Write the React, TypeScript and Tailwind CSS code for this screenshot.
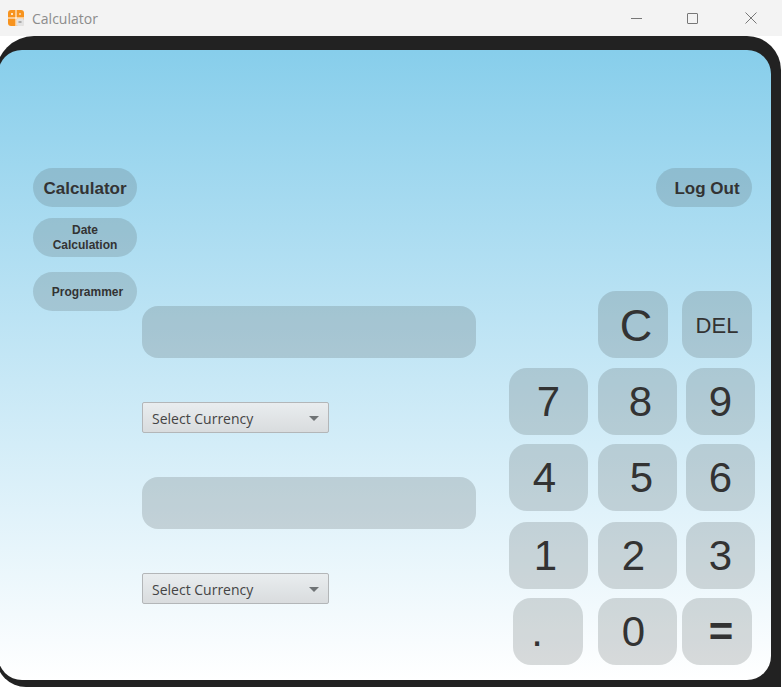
import React from 'react';

const font = { fontFamily: '"Liberation Sans", Arial, sans-serif' };

const Key: React.FC<{ label: string; w: string; text?: string }> = ({ label, w, text = 'text-[42px]' }) => (
  <button
    className={`${w} h-[67px] rounded-[18px] bg-[rgba(74,84,86,0.21)] text-[#333] flex items-center justify-center leading-none ${text}`}
  >
    {label}
  </button>
);

const SideButton: React.FC<{ children: React.ReactNode; className?: string }> = ({ children, className = '' }) => (
  <button
    className={`w-[104px] h-[39px] rounded-full bg-[rgba(74,84,86,0.2)] text-[#333] font-bold flex items-center justify-center text-center ${className}`}
  >
    {children}
  </button>
);

const CurrencySelect: React.FC = () => (
  <div className="w-[187px] h-[31px] rounded-[2px] border border-[#b3b6b8] bg-linear-to-b from-[#e9edef] to-[#d9dcde] flex items-center justify-between pl-[9px] pr-[9px] pt-[1px]">
    <span className="text-[14px] text-[#444]" style={{ fontFamily: '"Open Sans", "Noto Sans", sans-serif' }}>
      Select Currency
    </span>
    <svg width="10" height="5" viewBox="0 0 10 5">
      <path d="M0 0 H10 L5 5 Z" fill="#6f7375" />
    </svg>
  </div>
);

const AppIcon = () => (
  <svg width="16" height="16" viewBox="0 0 16 16">
    <rect x="0" y="0" width="16" height="16" rx="3" fill="#f7931e" />
    <rect x="8.5" y="8.5" width="7.5" height="7.5" rx="1.5" fill="#e3e3e3" />
    <path d="M0 8 H16 M8 0 V16" stroke="#fff" strokeWidth="1" />
    <path d="M3 4 H5 M4 3 V5" stroke="#fff" strokeWidth="1" />
    <path d="M11 4 H13" stroke="#fff" strokeWidth="1" />
    <path d="M10.5 12 H13.5" stroke="#888" strokeWidth="1.2" />
  </svg>
);

export default function App() {
  return (
    <div className="w-[782px] h-[687px] overflow-hidden bg-white flex flex-col" style={font}>
      {/* title bar */}
      <div className="h-[36px] shrink-0 bg-[#f3f3f3] flex items-center">
        <div className="ml-[8px]">
          <AppIcon />
        </div>
        <span className="ml-[8px] text-[14px] text-[#8c8c8c]" style={{ fontFamily: '"Open Sans", "Noto Sans", sans-serif' }}>
          Calculator
        </span>
        <div className="ml-auto flex items-center">
          <div className="w-[56px] flex justify-center">
            <div className="w-[11px] h-px bg-[#777]" />
          </div>
          <div className="w-[56px] flex justify-center">
            <div className="w-[11px] h-[11px] border border-[#777] rounded-[1px]" />
          </div>
          <div className="w-[62px] flex justify-center">
            <svg width="12" height="12" viewBox="0 0 12 12">
              <path d="M0.5 0.5 L11.5 11.5 M11.5 0.5 L0.5 11.5" stroke="#777" strokeWidth="1" />
            </svg>
          </div>
        </div>
      </div>

      {/* app frame */}
      <div className="ml-[-4px] w-[785px] h-[652px] bg-[#222] rounded-tl-[38px] rounded-tr-[34px] rounded-bl-[30px] pt-[14px] pl-[2px]">
        <div className="w-[773px] h-[630px] rounded-[24px] bg-linear-to-b from-[#87ceeb] to-white flex pt-[118px] pl-[35px]">
          {/* left nav */}
          <div className="w-[104px] flex flex-col">
            <SideButton className="text-[17px] pt-[3px]">Calculator</SideButton>
            <SideButton className="mt-[11px] text-[12px] leading-[15px] pt-[1px]">
              Date
              <br />
              Calculation
            </SideButton>
            <SideButton className="mt-[15px] text-[12px] pl-[5px] pt-[1px]">Programmer</SideButton>
          </div>

          {/* converter */}
          <div className="ml-[5px] w-[334px] flex flex-col pt-[138px]">
            <div className="h-[52px] rounded-[16px] bg-[rgba(74,84,86,0.21)]" />
            <div className="mt-[44px]">
              <CurrencySelect />
            </div>
            <div className="mt-[44px] h-[52px] rounded-[16px] bg-[rgba(74,84,86,0.21)]" />
            <div className="mt-[44px]">
              <CurrencySelect />
            </div>
          </div>

          {/* keypad */}
          <div className="ml-[33px] w-[246px] flex flex-col">
            <button className="self-end mr-[3px] w-[96px] h-[39px] rounded-full bg-[rgba(74,84,86,0.2)] text-[#333] font-bold text-[17px] flex items-center justify-center pt-[2px] pl-[6px]">
              Log Out
            </button>
            <div className="mt-[84px] flex pl-[89px] gap-[14px]">
              <Key label="C" w="w-[70px]" text="text-[45px] pl-[6px] pt-[2px]" />
              <Key label="DEL" w="w-[70px]" text="text-[22px] pt-[2px]" />
            </div>
            <div className="mt-[10px] flex">
              <Key label="7" w="w-[79px]" />
              <div className="w-[10px]" />
              <Key label="8" w="w-[79px]" text="text-[42px] pl-[6px]" />
              <div className="w-[9px]" />
              <Key label="9" w="w-[69px]" />
            </div>
            <div className="mt-[9px] flex">
              <Key label="4" w="w-[79px]" text="text-[42px] pr-[8px]" />
              <div className="w-[10px]" />
              <Key label="5" w="w-[79px]" text="text-[42px] pl-[8px]" />
              <div className="w-[9px]" />
              <Key label="6" w="w-[69px]" />
            </div>
            <div className="mt-[11px] flex">
              <Key label="1" w="w-[79px]" text="text-[42px] pr-[6px]" />
              <div className="w-[10px]" />
              <Key label="2" w="w-[79px]" text="text-[42px] pr-[8px]" />
              <div className="w-[9px]" />
              <Key label="3" w="w-[69px]" />
            </div>
            <div className="mt-[9px] flex pl-[4px]">
              <Key label="." w="w-[70px]" text="text-[42px] pr-[22px]" />
              <div className="w-[15px]" />
              <Key label="0" w="w-[79px]" text="text-[42px] pr-[8px]" />
              <div className="w-[5px]" />
              <Key label="=" w="w-[70px]" text="text-[42px] pl-[8px] font-bold" />
            </div>
          </div>
        </div>
      </div>
    </div>
  );
}
